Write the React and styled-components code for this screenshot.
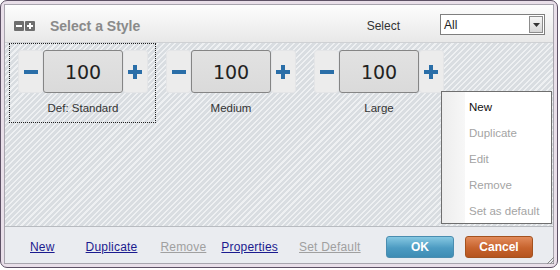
import React from "react";
import styled, { createGlobalStyle, css } from "styled-components";

const GlobalStyle = createGlobalStyle`
  html, body { margin: 0; padding: 0; background: #fff; }
  body { font-family: "Liberation Sans", Arial, sans-serif; }
`;

const STYLES = [
  { id: 1, label: "Def: Standard", value: 100, selected: true },
  { id: 2, label: "Medium", value: 100 },
  { id: 3, label: "Large", value: 100 },
];

const MENU = [
  { label: "New", enabled: true },
  { label: "Duplicate" },
  { label: "Edit" },
  { label: "Remove" },
  { label: "Set as default" },
];

const LINKS = [
  { label: "New", enabled: true, left: 25 },
  { label: "Duplicate", enabled: true, left: 31 },
  { label: "Remove", left: 23 },
  { label: "Properties", enabled: true, left: 15 },
  { label: "Set Default", left: 21 },
];

// ----- Window -----
const Window = styled.div`
  position: relative;
  box-sizing: border-box;
  width: 558px;
  height: 268px;
  border: 1px solid #5d5165;
  border-radius: 7px;
  background: #e9dfe9;
  padding: 3px;
`;

const Inner = styled.div`
  box-sizing: border-box;
  height: 100%;
  border: 1px solid #a8a5ae;
  display: flex;
  flex-direction: column;
  background: #eceef1;
`;

// 헤더
const Header = styled.div`
  height: 38px;
  border-bottom: 1px solid #cfd1d4;
  background: linear-gradient(#fdfdfd, #e8e8e8);
  display: flex;
  align-items: center;
  padding: 5px 8px 0 9px;
  box-sizing: border-box;
`;

const HeadIcons = styled.div`
  display: flex;
  gap: 1px;
  margin-right: 15px;
`;

const HeadIcon = styled.span`
  width: 10px;
  height: 10px;
  border-radius: 1px;
  background: #6f6f6f;
  display: flex;
  align-items: center;
  justify-content: center;
`;

const Title = styled.h1`
  margin: 0;
  font-size: 14px;
  font-weight: bold;
  color: #8a8a8a;
  flex: 1;
`;

const SelectLabel = styled.span`
  font-size: 12px;
  color: #333;
  margin-right: 40px;
`;

const SelectBox = styled.div`
  width: 105px;
  height: 21px;
  box-sizing: border-box;
  border: 1px solid #7f7f7f;
  background: #fff;
  display: flex;
  align-items: center;
  justify-content: space-between;
  padding: 0 1px 0 3px;
  font-size: 12px;
  color: #222;
  margin-top: -3px;
`;

const SelectArrow = styled.span`
  width: 14px;
  height: 17px;
  box-sizing: border-box;
  border: 1px solid #8c8c8c;
  background: linear-gradient(#f6f6f6, #d6d6d6);
  display: flex;
  align-items: center;
  justify-content: center;
`;

// 콘텐츠
const Content = styled.div`
  position: relative;
  flex: 1;
  display: flex;
  align-items: flex-start;
  gap: 1px;
  padding: 0 0 0 4px;
  background: repeating-linear-gradient(
    135deg,
    #eef0f2 0px,
    #eef0f2 1.5px,
    #d9dde1 1.5px,
    #d9dde1 4px
  );
`;

const Item = styled.div`
  box-sizing: border-box;
  width: 147px;
  height: 80px;
  padding: 6px 7px 0 8px;
  border: 1px dotted transparent;
  ${({ $selected }) =>
    $selected &&
    css`
      border-color: #222;
    `}
`;

const Stepper = styled.div`
  display: flex;
  height: 43px;
`;

const StepBtn = styled.button`
  width: 26px;
  height: 43px;
  padding: 0;
  border: 1px solid #e4e5e7;
  border-radius: 3px;
  background: #ececec;
  display: flex;
  align-items: center;
  justify-content: center;
`;

const Value = styled.div`
  box-sizing: border-box;
  width: 81px;
  height: 43px;
  border: 1px solid #858585;
  border-radius: 3px;
  background: linear-gradient(#e2e2e2, #dadada);
  display: flex;
  align-items: center;
  justify-content: center;
  font-family: "DejaVu Sans", sans-serif;
  font-size: 19px;
  color: #222;
`;

const ItemLabel = styled.div`
  text-align: center;
  font-size: 11.5px;
  color: #333;
  margin-top: 9px;
`;

// 컨텍스트 메뉴
const Menu = styled.ul`
  position: absolute;
  left: 436px;
  top: 48px;
  width: 111px;
  height: 133px;
  box-sizing: border-box;
  margin: 0;
  padding: 2px 0 0;
  list-style: none;
  border: 1px solid #6f6f6f;
  background: linear-gradient(90deg, #ededed 0, #f7f7f7 23px, #fff 23px);
`;

const MenuItem = styled.li`
  height: 26px;
  line-height: 26px;
  padding-left: 27px;
  font-size: 11.5px;
  color: ${({ $enabled }) => ($enabled ? "#111" : "#a4a4a4")};
`;

// 푸터
const Footer = styled.div`
  height: 37px;
  box-sizing: border-box;
  border-top: 1px solid #b8bbc0;
  display: flex;
  align-items: center;
  padding: 3px 20px 0 0;
  background: #eaecf0;
`;

const FooterLink = styled.a`
  font-size: 12px;
  letter-spacing: 0.2px;
  text-decoration: underline;
  margin-left: ${({ $left }) => $left}px;
  color: ${({ $enabled }) => ($enabled ? "#1b1b8f" : "#a0a0a0")};
`;

const Spacer = styled.div`
  flex: 1;
`;

const Button = styled.button`
  width: 68px;
  height: 22px;
  border-radius: 3px;
  font-family: "Liberation Sans", Arial, sans-serif;
  font-size: 12px;
  font-weight: bold;
  color: #fff;
  padding: 0;
  & + & {
    margin-left: 11px;
  }
  ${({ $tone }) =>
    $tone === "ok"
      ? css`
          border: 1px solid #4a8db0;
          background: linear-gradient(#86c8e2, #4c9bc2 55%, #3e8cb4);
        `
      : css`
          border: 1px solid #a4521f;
          background: linear-gradient(#e28b5c, #c7632d 55%, #b5541f);
        `}
`;

const Grip = styled.svg`
  position: absolute;
  right: 2px;
  bottom: 2px;
`;

const Minus = ({ color = "#2a6ea8", w = 14, h = 4 }) => (
  <svg width={w} height={w} viewBox={`0 0 ${w} ${w}`}>
    <rect x="0" y={(w - h) / 2} width={w} height={h} fill={color} />
  </svg>
);

const Plus = ({ color = "#2a6ea8", w = 14, h = 4 }) => (
  <svg width={w} height={w} viewBox={`0 0 ${w} ${w}`}>
    <rect x="0" y={(w - h) / 2} width={w} height={h} fill={color} />
    <rect x={(w - h) / 2} y="0" width={h} height={w} fill={color} />
  </svg>
);

const App = () => {
  return (
    <>
      <GlobalStyle />
      <Window>
        <Inner>
          <Header>
            <HeadIcons>
              <HeadIcon>
                <Minus color="#fff" w={6} h={2} />
              </HeadIcon>
              <HeadIcon>
                <Plus color="#fff" w={6} h={2} />
              </HeadIcon>
            </HeadIcons>
            <Title>Select a Style</Title>
            <SelectLabel>Select</SelectLabel>
            <SelectBox>
              All
              <SelectArrow>
                <svg width="7" height="4" viewBox="0 0 7 4">
                  <path d="M0 0h7L3.5 4z" fill="#333" />
                </svg>
              </SelectArrow>
            </SelectBox>
          </Header>

          <Content>
            {STYLES.map((s) => (
              <Item key={s.id} $selected={s.selected}>
                <Stepper>
                  <StepBtn>
                    <Minus />
                  </StepBtn>
                  <Value>{s.value}</Value>
                  <StepBtn>
                    <Plus />
                  </StepBtn>
                </Stepper>
                <ItemLabel>{s.label}</ItemLabel>
              </Item>
            ))}

            <Menu>
              {MENU.map((m) => (
                <MenuItem key={m.label} $enabled={m.enabled}>
                  {m.label}
                </MenuItem>
              ))}
            </Menu>
          </Content>

          <Footer>
            {LINKS.map((l) => (
              <FooterLink key={l.label} $left={l.left} $enabled={l.enabled}>
                {l.label}
              </FooterLink>
            ))}
            <Spacer />
            <Button $tone="ok">OK</Button>
            <Button $tone="cancel">Cancel</Button>
          </Footer>
        </Inner>
        <Grip width="10" height="10" viewBox="0 0 10 10">
          <path d="M9 2L2 9M9 5L5 9M9 8L8 9" stroke="#8a8a8a" strokeWidth="1" />
        </Grip>
      </Window>
    </>
  );
};

export default App;
